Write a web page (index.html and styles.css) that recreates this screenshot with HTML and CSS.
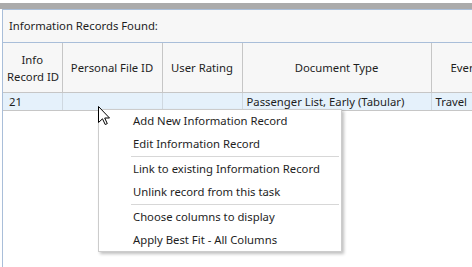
FILE: index.html
```html
<!DOCTYPE html>
<html lang="en">
<head>
    <meta charset="UTF-8">
    <title>Information Records</title>
    <link rel="stylesheet" href="styles.css">
</head>
<body>
    <div class="topbar"></div>
    <div class="panel">
        <div class="caption">Information Records Found:</div>
        <table class="grid">
            <colgroup>
                <col class="c-id">
                <col class="c-file">
                <col class="c-rating">
                <col class="c-doc">
                <col class="c-event">
            </colgroup>
            <thead>
                <tr>
                    <th>Info<br>Record ID</th>
                    <th>Personal File ID</th>
                    <th>User Rating</th>
                    <th>Document Type</th>
                    <th class="clip">Event</th>
                </tr>
            </thead>
            <tbody>
                <tr class="selected">
                    <td>21</td>
                    <td></td>
                    <td></td>
                    <td>Passenger List, Early (Tabular)</td>
                    <td>Travel</td>
                </tr>
            </tbody>
        </table>
    </div>

    <ul class="menu">
        <li>Add New Information Record</li>
        <li>Edit Information Record</li>
        <li class="sep"></li>
        <li>Link to existing Information Record</li>
        <li>Unlink record from this task</li>
        <li class="sep"></li>
        <li>Choose columns to display</li>
        <li>Apply Best Fit - All Columns</li>
    </ul>

    <svg class="cursor" width="13" height="20" viewBox="0 0 13 20">
        <path d="M0.5 0.5 L0.5 16.5 L4.5 12.8 L7.2 18.5 L9.3 17.6 L6.7 12 L11.5 12 Z" fill="#fff" stroke="#000" stroke-width="1" stroke-linejoin="miter"/>
    </svg>
</body>
</html>
```

FILE: styles.css
```css
body {
    margin: 0;
    font-family: "Noto Sans", "Open Sans", sans-serif;
    font-size: 11.3px;
    color: #1e1e1e;
    background-color: #ffffff;
    width: 472px;
    height: 267px;
    overflow: hidden;
    position: relative;
}
.topbar {
    margin-top: 3px;
    height: 6px;
    background-color: #ababab;
}
.panel {
    margin-left: 2px;
    border-left: 1px solid #a9bed9;
    border-top: 1px solid #a9bed9;
    height: 260px;
    overflow: hidden;
}
.caption {
    height: 32px;
    line-height: 32px;
    padding-left: 6px;
    background-color: #f7f7f7;
    border-bottom: 1px solid #a9bed9;
}
.grid {
    border-collapse: collapse;
    table-layout: fixed;
    width: 520px;
}
.c-id { width: 59px; }
.c-file { width: 100px; }
.c-rating { width: 80px; }
.c-doc { width: 189px; }
.c-event { width: 92px; }
.grid th {
    height: 49px;
    padding: 0 4px;
    font-weight: normal;
    text-align: center;
    line-height: 17px;
    background-color: #f7f7f7;
    border-left: 1px solid #c6c6c6;
    border-bottom: 1px solid #c6c6c6;
    white-space: nowrap;
    overflow: hidden;
}
.grid th:first-child,
.grid td:first-child {
    border-left: none;
}
.grid th.clip {
    text-align: left;
    padding-left: 19px;
}
.grid td {
    height: 17px;
    padding: 0 4px;
    line-height: 17px;
    white-space: nowrap;
    overflow: hidden;
    border-left: 1px solid #cfd8e0;
    border-bottom: 1px solid #c6c6c6;
}
.grid tr.selected td {
    background-color: #e5f1fb;
}
.grid td:first-child {
    padding-left: 6px;
}
.menu {
    position: absolute;
    left: 98px;
    top: 109px;
    width: 242px;
    margin: 0;
    padding: 0;
    list-style: none;
    background-color: #ffffff;
    border: 1px solid #cccccc;
    box-shadow: 2px 2px 3px rgba(0, 0, 0, 0.25);
}
.menu li {
    height: 22.5px;
    line-height: 22.5px;
    padding-left: 34px;
    white-space: nowrap;
}
.menu li.sep {
    height: 1px;
    margin: 1px 2px 1px 32px;
    background-color: #d7d7d7;
}
.cursor {
    position: absolute;
    left: 98px;
    top: 106px;
}
```
